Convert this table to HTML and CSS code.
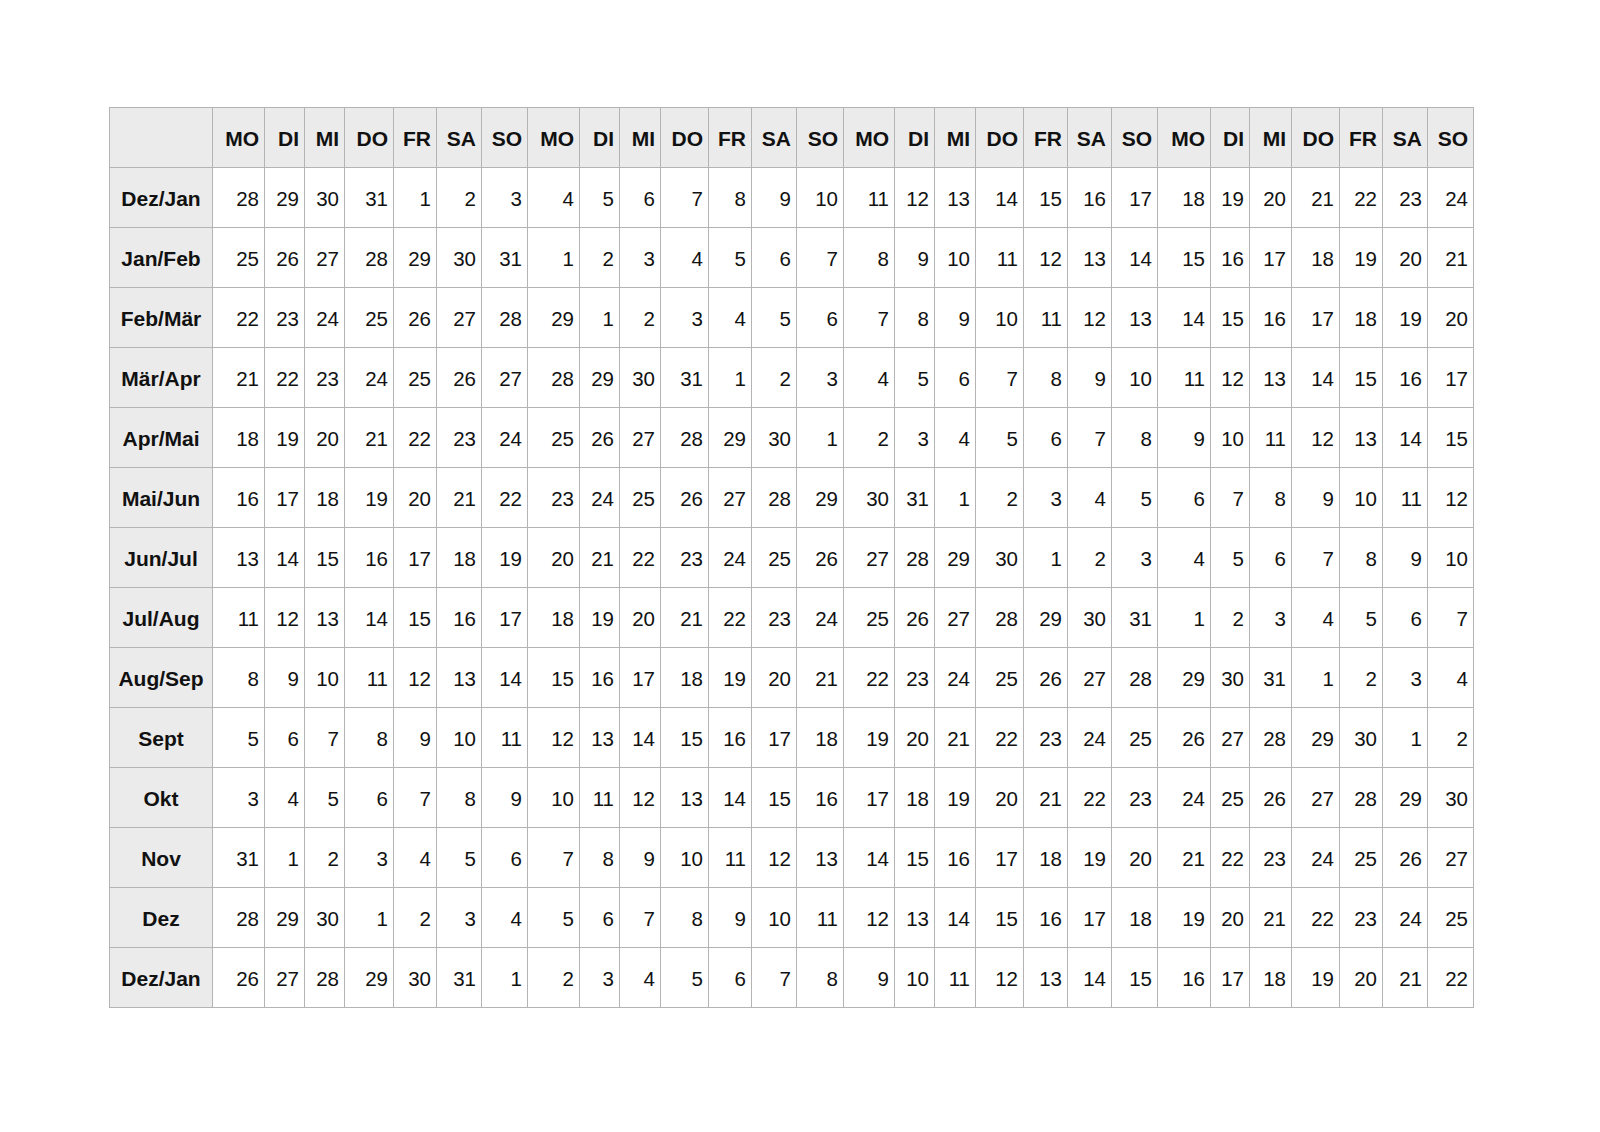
FILE: index.html
```html
<!DOCTYPE html>
<html lang="de">
<head>
<meta charset="utf-8">
<title>Kalender</title>
<link rel="stylesheet" href="styles.css">
</head>
<body>
<div class="page">
<table class="cal">
<colgroup>
<col class="c-label">
<col class="w52"><col class="w40"><col class="w40"><col class="w49"><col class="w43"><col class="w45"><col class="w46">
<col class="w52"><col class="w40"><col class="w41"><col class="w48"><col class="w43"><col class="w45"><col class="w47">
<col class="w51"><col class="w40"><col class="w41"><col class="w48"><col class="w44"><col class="w44"><col class="w46">
<col class="w53"><col class="w39"><col class="w42"><col class="w48"><col class="w43"><col class="w45"><col class="w46">
</colgroup>
<thead>
<tr><th class="corner"></th>
<th>MO</th><th>DI</th><th>MI</th><th>DO</th><th>FR</th><th>SA</th><th>SO</th>
<th>MO</th><th>DI</th><th>MI</th><th>DO</th><th>FR</th><th>SA</th><th>SO</th>
<th>MO</th><th>DI</th><th>MI</th><th>DO</th><th>FR</th><th>SA</th><th>SO</th>
<th>MO</th><th>DI</th><th>MI</th><th>DO</th><th>FR</th><th>SA</th><th>SO</th></tr>
</thead>
<tbody>
<tr><th>Dez/Jan</th><td>28</td><td>29</td><td>30</td><td>31</td><td>1</td><td>2</td><td>3</td><td>4</td><td>5</td><td>6</td><td>7</td><td>8</td><td>9</td><td>10</td><td>11</td><td>12</td><td>13</td><td>14</td><td>15</td><td>16</td><td>17</td><td>18</td><td>19</td><td>20</td><td>21</td><td>22</td><td>23</td><td>24</td></tr>
<tr><th>Jan/Feb</th><td>25</td><td>26</td><td>27</td><td>28</td><td>29</td><td>30</td><td>31</td><td>1</td><td>2</td><td>3</td><td>4</td><td>5</td><td>6</td><td>7</td><td>8</td><td>9</td><td>10</td><td>11</td><td>12</td><td>13</td><td>14</td><td>15</td><td>16</td><td>17</td><td>18</td><td>19</td><td>20</td><td>21</td></tr>
<tr><th>Feb/Mär</th><td>22</td><td>23</td><td>24</td><td>25</td><td>26</td><td>27</td><td>28</td><td>29</td><td>1</td><td>2</td><td>3</td><td>4</td><td>5</td><td>6</td><td>7</td><td>8</td><td>9</td><td>10</td><td>11</td><td>12</td><td>13</td><td>14</td><td>15</td><td>16</td><td>17</td><td>18</td><td>19</td><td>20</td></tr>
<tr><th>Mär/Apr</th><td>21</td><td>22</td><td>23</td><td>24</td><td>25</td><td>26</td><td>27</td><td>28</td><td>29</td><td>30</td><td>31</td><td>1</td><td>2</td><td>3</td><td>4</td><td>5</td><td>6</td><td>7</td><td>8</td><td>9</td><td>10</td><td>11</td><td>12</td><td>13</td><td>14</td><td>15</td><td>16</td><td>17</td></tr>
<tr><th>Apr/Mai</th><td>18</td><td>19</td><td>20</td><td>21</td><td>22</td><td>23</td><td>24</td><td>25</td><td>26</td><td>27</td><td>28</td><td>29</td><td>30</td><td>1</td><td>2</td><td>3</td><td>4</td><td>5</td><td>6</td><td>7</td><td>8</td><td>9</td><td>10</td><td>11</td><td>12</td><td>13</td><td>14</td><td>15</td></tr>
<tr><th>Mai/Jun</th><td>16</td><td>17</td><td>18</td><td>19</td><td>20</td><td>21</td><td>22</td><td>23</td><td>24</td><td>25</td><td>26</td><td>27</td><td>28</td><td>29</td><td>30</td><td>31</td><td>1</td><td>2</td><td>3</td><td>4</td><td>5</td><td>6</td><td>7</td><td>8</td><td>9</td><td>10</td><td>11</td><td>12</td></tr>
<tr><th>Jun/Jul</th><td>13</td><td>14</td><td>15</td><td>16</td><td>17</td><td>18</td><td>19</td><td>20</td><td>21</td><td>22</td><td>23</td><td>24</td><td>25</td><td>26</td><td>27</td><td>28</td><td>29</td><td>30</td><td>1</td><td>2</td><td>3</td><td>4</td><td>5</td><td>6</td><td>7</td><td>8</td><td>9</td><td>10</td></tr>
<tr><th>Jul/Aug</th><td>11</td><td>12</td><td>13</td><td>14</td><td>15</td><td>16</td><td>17</td><td>18</td><td>19</td><td>20</td><td>21</td><td>22</td><td>23</td><td>24</td><td>25</td><td>26</td><td>27</td><td>28</td><td>29</td><td>30</td><td>31</td><td>1</td><td>2</td><td>3</td><td>4</td><td>5</td><td>6</td><td>7</td></tr>
<tr><th>Aug/Sep</th><td>8</td><td>9</td><td>10</td><td>11</td><td>12</td><td>13</td><td>14</td><td>15</td><td>16</td><td>17</td><td>18</td><td>19</td><td>20</td><td>21</td><td>22</td><td>23</td><td>24</td><td>25</td><td>26</td><td>27</td><td>28</td><td>29</td><td>30</td><td>31</td><td>1</td><td>2</td><td>3</td><td>4</td></tr>
<tr><th>Sept</th><td>5</td><td>6</td><td>7</td><td>8</td><td>9</td><td>10</td><td>11</td><td>12</td><td>13</td><td>14</td><td>15</td><td>16</td><td>17</td><td>18</td><td>19</td><td>20</td><td>21</td><td>22</td><td>23</td><td>24</td><td>25</td><td>26</td><td>27</td><td>28</td><td>29</td><td>30</td><td>1</td><td>2</td></tr>
<tr><th>Okt</th><td>3</td><td>4</td><td>5</td><td>6</td><td>7</td><td>8</td><td>9</td><td>10</td><td>11</td><td>12</td><td>13</td><td>14</td><td>15</td><td>16</td><td>17</td><td>18</td><td>19</td><td>20</td><td>21</td><td>22</td><td>23</td><td>24</td><td>25</td><td>26</td><td>27</td><td>28</td><td>29</td><td>30</td></tr>
<tr><th>Nov</th><td>31</td><td>1</td><td>2</td><td>3</td><td>4</td><td>5</td><td>6</td><td>7</td><td>8</td><td>9</td><td>10</td><td>11</td><td>12</td><td>13</td><td>14</td><td>15</td><td>16</td><td>17</td><td>18</td><td>19</td><td>20</td><td>21</td><td>22</td><td>23</td><td>24</td><td>25</td><td>26</td><td>27</td></tr>
<tr><th>Dez</th><td>28</td><td>29</td><td>30</td><td>1</td><td>2</td><td>3</td><td>4</td><td>5</td><td>6</td><td>7</td><td>8</td><td>9</td><td>10</td><td>11</td><td>12</td><td>13</td><td>14</td><td>15</td><td>16</td><td>17</td><td>18</td><td>19</td><td>20</td><td>21</td><td>22</td><td>23</td><td>24</td><td>25</td></tr>
<tr><th>Dez/Jan</th><td>26</td><td>27</td><td>28</td><td>29</td><td>30</td><td>31</td><td>1</td><td>2</td><td>3</td><td>4</td><td>5</td><td>6</td><td>7</td><td>8</td><td>9</td><td>10</td><td>11</td><td>12</td><td>13</td><td>14</td><td>15</td><td>16</td><td>17</td><td>18</td><td>19</td><td>20</td><td>21</td><td>22</td></tr>
</tbody>
</table>
</div>
</body>
</html>
```
FILE: styles.css
```css
html, body {
  margin: 0;
  padding: 0;
  background: #ffffff;
}

.page {
  padding: 107px 0 0 109px;
}

.cal {
  border-collapse: collapse;
  table-layout: fixed;
  width: 1365px;
  font-family: "Liberation Sans", Arial, sans-serif;
  color: #111111;
}

.cal th,
.cal td {
  height: 56px;
  border: 1px solid #b4b4b4;
  padding: 3px 5px 0 0;
  text-align: right;
  vertical-align: middle;
  white-space: nowrap;
  overflow: hidden;
}

.cal td {
  font-size: 20.5px;
  font-weight: normal;
  background: #ffffff;
}

.cal th {
  font-size: 21px;
  font-weight: bold;
  background: #ebebeb;
}

.cal tbody th {
  text-align: center;
  padding-right: 0;
}

.c-label { width: 103px; }
.w39 { width: 39px; }
.w40 { width: 40px; }
.w41 { width: 41px; }
.w42 { width: 42px; }
.w43 { width: 43px; }
.w44 { width: 44px; }
.w45 { width: 45px; }
.w46 { width: 46px; }
.w47 { width: 47px; }
.w48 { width: 48px; }
.w49 { width: 49px; }
.w51 { width: 51px; }
.w52 { width: 52px; }
.w53 { width: 53px; }
```
